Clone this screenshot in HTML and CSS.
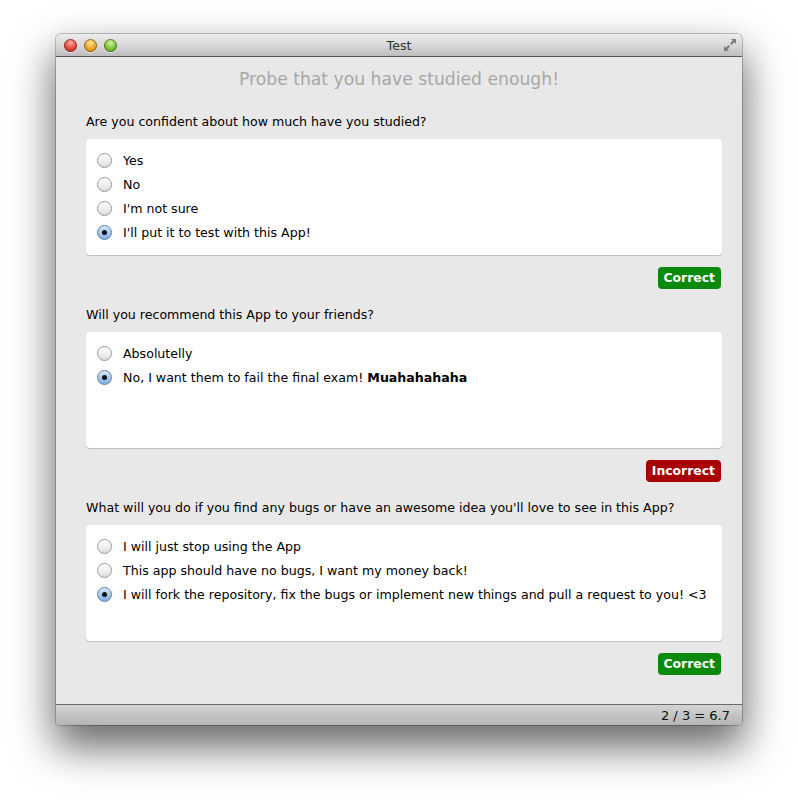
FILE: index.html
```html
<!DOCTYPE html>
<html>
<head>
<meta charset="utf-8">
<link rel="stylesheet" href="styles.css">
</head>
<body>
<div class="window">
  <div class="titlebar">
    <div class="lights">
      <span class="light red"></span>
      <span class="light yellow"></span>
      <span class="light green"></span>
    </div>
    <div class="title">Test</div>
    <div class="tools">
      <svg class="resize" width="14" height="14" viewBox="0 0 14 14">
        <path d="M8 1 H13 V6 L11.3 4.3 L8.6 7 L7 5.4 L9.7 2.7 Z" fill="#7a7a7a"/>
        <path d="M6 13 H1 V8 L2.7 9.7 L5.4 7 L7 8.6 L4.3 11.3 Z" fill="#7a7a7a"/>
      </svg>
    </div>
  </div>
  <div class="content">
    <h1 class="heading">Probe that you have studied enough!</h1>

    <section class="question">
      <div class="label">Are you confident about how much have you studied?</div>
      <div class="panel">
        <div class="option"><span class="radio"></span>Yes</div>
        <div class="option"><span class="radio"></span>No</div>
        <div class="option"><span class="radio"></span>I'm not sure</div>
        <div class="option"><span class="radio checked"></span>I'll put it to test with this App!</div>
      </div>
      <div class="actions"><span class="badge ok">Correct</span></div>
    </section>

    <section class="question">
      <div class="label">Will you recommend this App to your friends?</div>
      <div class="panel">
        <div class="option"><span class="radio"></span>Absolutelly</div>
        <div class="option"><span class="radio checked"></span>No, I want them to fail the final exam!&nbsp;<b>Muahahahaha</b></div>
      </div>
      <div class="actions"><span class="badge bad">Incorrect</span></div>
    </section>

    <section class="question">
      <div class="label">What will you do if you find any bugs or have an awesome idea you'll love to see in this App?</div>
      <div class="panel">
        <div class="option"><span class="radio"></span>I will just stop using the App</div>
        <div class="option"><span class="radio"></span>This app should have no bugs, I want my money back!</div>
        <div class="option"><span class="radio checked"></span>I will fork the repository, fix the bugs or implement new things and pull a request to you! &lt;3</div>
      </div>
      <div class="actions"><span class="badge ok">Correct</span></div>
    </section>
  </div>
  <div class="statusbar">2 / 3 = 6.7</div>
</div>
</body>
</html>
```
FILE: styles.css
```css
html, body {
  margin: 0;
  padding: 0;
  background: #ffffff;
}
body {
  font-family: "DejaVu Sans", "Liberation Sans", sans-serif;
  font-size: 12.6px;
  color: #000;
  min-height: 804px;
  padding-top: 34px;
  box-sizing: border-box;
}
.window {
  margin: 0 0 0 56px;
  width: 686px;
  height: 691px;
  display: flex;
  flex-direction: column;
  border-radius: 5px 5px 4px 4px;
  box-shadow: 0 0 0 1px rgba(0,0,0,0.22), 0 20px 42px 2px rgba(0,0,0,0.6);
  background: #e8e8e8;
  overflow: hidden;
}
.titlebar {
  height: 22px;
  flex: none;
  display: flex;
  align-items: center;
  background: linear-gradient(#ececec, #d9d9d9 50%, #bdbdbd);
  border-bottom: 1px solid #555;
  padding: 0 8px;
}
.lights {
  display: flex;
  gap: 7px;
  width: 100px;
}
.tools {
  width: 100px;
  display: flex;
  justify-content: flex-end;
}
.light {
  width: 13px;
  height: 13px;
  border-radius: 50%;
  box-shadow: inset 0 0 0 1px rgba(0,0,0,0.35), 0 1px 1px rgba(255,255,255,0.6);
}
.light.red { background: radial-gradient(circle at 50% 30%, #ffb0a8 0, #e3483c 50%, #b8231a 100%); }
.light.yellow { background: radial-gradient(circle at 50% 30%, #ffe6a0 0, #f0a42a 50%, #c27a0c 100%); }
.light.green { background: radial-gradient(circle at 50% 30%, #d6f5a0 0, #82c23c 50%, #4c8d1a 100%); }
.title {
  flex: 1;
  text-align: center;
  font-size: 12.6px;
  color: #333;
}
.resize { flex: none; margin-right: -3px; }
.content {
  flex: 1;
  padding: 10px 20px 0 30px;
}
.heading {
  margin: 0;
  text-align: center;
  font-size: 17.2px;
  font-weight: normal;
  line-height: 24px;
  color: #a7a7a7;
  padding-right: 10px;
  margin-bottom: 23px;
}
.question + .question { margin-top: 18px; }
.label {
  line-height: 16px;
  margin-bottom: 9px;
}
.panel {
  height: 116px;
  box-sizing: border-box;
  background: #fff;
  border-radius: 4px;
  box-shadow: 0 1px 1px rgba(0,0,0,0.18);
  padding: 9px 0 0 11px;
}
.option {
  height: 24px;
  display: flex;
  align-items: center;
  padding-top: 1px;
  box-sizing: border-box;
}
.radio {
  width: 15px;
  height: 15px;
  box-sizing: border-box;
  border-radius: 50%;
  border: 1px solid #9a9a9a;
  background: linear-gradient(#ffffff, #f0f0f0 50%, #dcdcdc);
  margin-right: 11px;
  display: inline-flex;
  align-items: center;
  justify-content: center;
}
.radio.checked {
  border-color: #5f7fa8;
  background: linear-gradient(#d8e8f8, #a9c9ee 50%, #7fb0e6);
}
.radio.checked::after {
  content: "";
  width: 5px;
  height: 5px;
  border-radius: 50%;
  background: #111;
}
.actions {
  display: flex;
  justify-content: flex-end;
  margin-top: 12px;
  padding-right: 1px;
}
.badge {
  height: 22px;
  line-height: 21px;
  padding: 0 6px;
  border-radius: 4px;
  color: #fff;
  font-weight: bold;
  font-size: 12.4px;
}
.badge.ok { background: #0a8a0a; }
.badge.bad { background: #a80000; }
.statusbar {
  height: 20px;
  flex: none;
  border-top: 1px solid #6b6b6b;
  background: linear-gradient(#d4d4d4, #b5b5b5);
  text-align: right;
  padding-right: 12px;
  line-height: 21px;
  font-size: 13px;
  color: #111;
}
```
